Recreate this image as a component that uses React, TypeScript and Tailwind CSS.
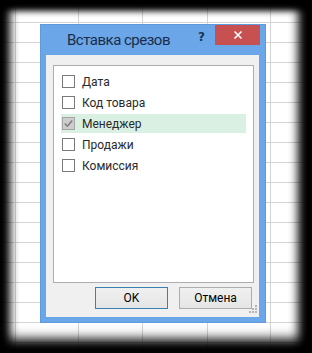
import React from "react";

const colWidths = [16, 63, 64, 65, 63, 41];
const rowHeights = [3, ...Array.from({ length: 18 }, () => 20)];

const items = [
  { label: "Дата", checked: false },
  { label: "Код товара", checked: false },
  { label: "Менеджер", checked: true },
  { label: "Продажи", checked: false },
  { label: "Комиссия", checked: false },
];

function Box({ checked }: { checked: boolean }) {
  if (checked) {
    return (
      <div className="w-[13px] h-[13px] border border-[#a6a6a6] bg-[#cdcdcd] flex items-center justify-center shrink-0">
        <svg width="11" height="11" viewBox="0 0 11 11">
          <path d="M1.8 5.6 L4.3 8.2 L9.3 2.4" fill="none" stroke="#7b7b7b" strokeWidth="1.5" />
        </svg>
      </div>
    );
  }
  return <div className="w-[13px] h-[13px] border border-[#7a7a7a] bg-white shrink-0" />;
}

export default function App() {
  return (
    <div className="relative w-[312px] h-[353px] overflow-hidden bg-white font-['Roboto',sans-serif]">
      {/* spreadsheet grid */}
      <div className="flex flex-col">
        {rowHeights.map((h, r) => (
          <div key={r} className="flex" style={{ height: h }}>
            {colWidths.map((w, c) => (
              <div
                key={c}
                className="border-r border-b border-[#d4d4d4] shrink-0"
                style={{ width: w }}
              />
            ))}
          </div>
        ))}
      </div>

      {/* dialog */}
      <div className="absolute left-[40px] top-[24px] w-[226px] h-[299px] bg-[#6aa6e8] border border-[#5f9adc] flex flex-col">
        <div className="h-[30px] flex items-start shrink-0">
          <div className="h-[30px] flex items-center pl-[26px] text-[15px] tracking-[-0.5px] text-[#1a2d4b] leading-none">
            Вставка срезов
          </div>
          <div className="flex-1" />
          <div className="mt-[6px] mr-[10px] text-[12px] font-bold text-[#1b3553] leading-none font-['DejaVu_Sans',sans-serif]">
            ?
          </div>
          <div className="w-[45px] h-[20px] bg-[#c75050] flex items-center justify-center mr-[5px]">
            <svg width="10" height="10" viewBox="0 0 10 10">
              <path d="M1.5 1.5 L8.5 8.5 M8.5 1.5 L1.5 8.5" stroke="#ffffff" strokeWidth="1.6" />
            </svg>
          </div>
        </div>
        <div className="relative flex-1 mb-[5px] ml-[5px] mr-[6px] bg-[#f0f0f0] flex flex-col pl-[7px] pt-[10px]">
          <div className="w-[201px] h-[218px] bg-white border border-[#abadb3] flex flex-col pt-[6px] gap-[2px]">
            {items.map((it) => (
              <div
                key={it.label}
                className={`h-[19px] mx-[7px] pl-[1px] flex items-center text-[12px] text-[#2a2a2a] ${
                  it.checked ? "bg-[#daf0e2]" : ""
                }`}
              >
                <Box checked={it.checked} />
                <span className="ml-[7px] leading-none">{it.label}</span>
              </div>
            ))}
          </div>
          <div className="flex mt-[4px] ml-[42px] gap-[11px]">
            <div className="w-[73px] h-[22px] border border-[#3c7fb1] bg-[linear-gradient(#f0f0f0,#e5e5e5)] flex items-center justify-center text-[12px] text-black">
              OK
            </div>
            <div className="w-[73px] h-[22px] border border-[#acacac] bg-[linear-gradient(#f0f0f0,#e5e5e5)] flex items-center justify-center text-[12px] text-black">
              Отмена
            </div>
          </div>
          <svg className="absolute right-[1px] bottom-[3px]" width="9" height="9" viewBox="0 0 9 9">
            <rect x="6" y="0" width="2" height="2" fill="#b5b5b5" />
            <rect x="3" y="3" width="2" height="2" fill="#b5b5b5" />
            <rect x="6" y="3" width="2" height="2" fill="#b5b5b5" />
            <rect x="0" y="6" width="2" height="2" fill="#b5b5b5" />
            <rect x="3" y="6" width="2" height="2" fill="#b5b5b5" />
            <rect x="6" y="6" width="2" height="2" fill="#b5b5b5" />
          </svg>
        </div>
      </div>

      {/* vignette */}
      <div className="pointer-events-none absolute inset-0 shadow-[inset_10px_0_10px_#000,inset_0_11px_6px_#000,inset_-14px_0_10px_#000,inset_0_-14px_12px_#000]" />
    </div>
  );
}
